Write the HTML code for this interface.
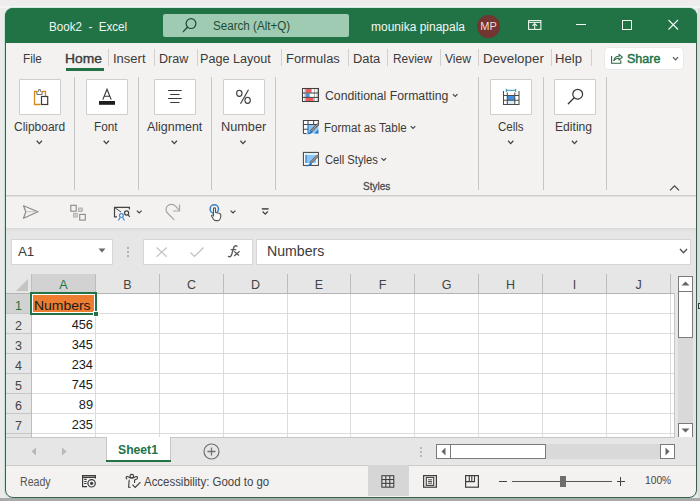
<!DOCTYPE html>
<html><head><meta charset="utf-8"><title>Book2 - Excel</title>
<style>
html,body{margin:0;padding:0;width:700px;height:501px;overflow:hidden;}
body{position:relative;font-family:"Liberation Sans",sans-serif;}
.a{position:absolute;}
.t{white-space:pre;line-height:1;}
svg.a{overflow:visible;}
</style></head><body>
<div class="a" style="left:0px;top:0px;width:700px;height:501px;background:#ebebeb;"></div>
<div class="a" style="left:0px;top:0px;width:700px;height:6px;background:#eeeded;"></div>
<div class="a" style="left:0px;top:6px;width:700px;height:2px;background:#f6f5f5;"></div>
<div class="a" style="left:698px;top:8px;width:2px;height:490px;background:#dcdcdc;"></div>
<div class="a" style="left:0px;top:498px;width:700px;height:3px;background:#a9aaa9;"></div>
<div class="a" style="left:4px;top:7px;width:694px;height:492px;border:1px solid rgba(110,210,160,0.3);box-sizing:border-box;border-radius:9px"></div>
<div class="a" style="left:5px;top:8px;width:692px;height:490px;background:#f3f2f1;border:1px solid #3a5f4b;box-sizing:border-box;border-radius:8px;overflow:hidden">
</div>
<div class="a" style="left:5px;top:8px;width:692px;height:35px;background:#217346;border-radius:8px 8px 0 0"></div>
<div class="a t" style="top:20.75px;font-size:12.5px;color:#f2f7f4;left:48.87px;transform:scaleX(0.9297);transform-origin:0 0;">Book2&nbsp; -&nbsp; Excel</div>
<div class="a" style="left:163px;top:14px;width:186px;height:23px;background:#9fcbb2;border-radius:2px;"></div>
<div class="a t" style="top:19.75px;font-size:12.5px;color:#1f4d34;left:213.00px;transform:scaleX(0.9294);transform-origin:0 0;">Search (Alt+Q)</div>
<div class="a t" style="top:20.75px;font-size:12.5px;color:#f2f7f4;left:371.00px;transform:scaleX(0.9589);transform-origin:0 0;">mounika pinapala</div>
<div class="a" style="left:477px;top:14.5px;width:23px;height:23px;border-radius:50%;background:#72352f"></div>
<div class="a t" style="top:20.50px;font-size:11px;color:#f1dcda;left:338.5px;width:300px;text-align:center;">MP</div>
<div class="a" style="left:576px;top:24px;width:10px;height:1px;background:#f2f7f4;"></div>
<div class="a" style="left:622px;top:20px;width:10px;height:10px;border:1px solid #f2f7f4;box-sizing:border-box;"></div>
<div class="a t" style="top:52.75px;font-size:12.5px;color:#3b3a39;left:22.66px;transform:scaleX(0.9380);transform-origin:0 0;">File</div>
<div class="a t" style="top:52.75px;font-size:12.5px;color:#3b3a39;left:65.49px;transform:scaleX(1.1052);transform-origin:0 0;-webkit-text-stroke:0.35px #3b3a39;">Home</div>
<div class="a t" style="top:52.75px;font-size:12.5px;color:#3b3a39;left:113.26px;transform:scaleX(1.0393);transform-origin:0 0;">Insert</div>
<div class="a t" style="top:52.75px;font-size:12.5px;color:#3b3a39;left:158.99px;transform:scaleX(1.0054);transform-origin:0 0;">Draw</div>
<div class="a t" style="top:52.75px;font-size:12.5px;color:#3b3a39;left:199.99px;transform:scaleX(1.0097);transform-origin:0 0;">Page Layout</div>
<div class="a t" style="top:52.75px;font-size:12.5px;color:#3b3a39;left:286.47px;transform:scaleX(1.0326);transform-origin:0 0;">Formulas</div>
<div class="a t" style="top:52.75px;font-size:12.5px;color:#3b3a39;left:352.67px;transform:scaleX(1.0333);transform-origin:0 0;">Data</div>
<div class="a t" style="top:52.75px;font-size:12.5px;color:#3b3a39;left:392.95px;transform:scaleX(0.9522);transform-origin:0 0;">Review</div>
<div class="a t" style="top:52.75px;font-size:12.5px;color:#3b3a39;left:445.00px;transform:scaleX(0.9698);transform-origin:0 0;">View</div>
<div class="a t" style="top:52.75px;font-size:12.5px;color:#3b3a39;left:482.93px;transform:scaleX(1.0678);transform-origin:0 0;">Developer</div>
<div class="a t" style="top:52.75px;font-size:12.5px;color:#3b3a39;left:555.15px;transform:scaleX(1.0502);transform-origin:0 0;">Help</div>
<div class="a" style="left:108px;top:49px;width:1px;height:17px;background:#d2d0ce;"></div>
<div class="a" style="left:154px;top:49px;width:1px;height:17px;background:#d2d0ce;"></div>
<div class="a" style="left:197px;top:49px;width:1px;height:17px;background:#d2d0ce;"></div>
<div class="a" style="left:281px;top:49px;width:1px;height:17px;background:#d2d0ce;"></div>
<div class="a" style="left:348px;top:49px;width:1px;height:17px;background:#d2d0ce;"></div>
<div class="a" style="left:387px;top:49px;width:1px;height:17px;background:#d2d0ce;"></div>
<div class="a" style="left:440px;top:49px;width:1px;height:17px;background:#d2d0ce;"></div>
<div class="a" style="left:478px;top:49px;width:1px;height:17px;background:#d2d0ce;"></div>
<div class="a" style="left:551px;top:49px;width:1px;height:17px;background:#d2d0ce;"></div>
<div class="a" style="left:591px;top:49px;width:1px;height:17px;background:#d2d0ce;"></div>
<div class="a" style="left:66px;top:68px;width:38px;height:3px;background:#217346;"></div>
<div class="a" style="left:604px;top:47px;width:80px;height:23px;background:#ffffff;border:1px solid #ebe9e7;box-sizing:border-box;border-radius:4px;"></div>
<div class="a t" style="top:52.75px;font-size:12.5px;color:#217346;left:627.20px;transform:scaleX(1.0029);transform-origin:0 0;-webkit-text-stroke:0.45px #217346;">Share</div>
<div class="a" style="left:19px;top:79px;width:42px;height:36px;background:#ffffff;border:1px solid #d0cecc;box-sizing:border-box;border-radius:1px;"></div>
<div class="a t" style="top:120.75px;font-size:12.5px;color:#3b3a39;left:14.40px;transform:scaleX(0.9561);transform-origin:0 0;">Clipboard</div>
<div class="a" style="left:86px;top:79px;width:42px;height:36px;background:#ffffff;border:1px solid #d0cecc;box-sizing:border-box;border-radius:1px;"></div>
<div class="a t" style="top:120.75px;font-size:12.5px;color:#3b3a39;left:94.46px;transform:scaleX(0.9373);transform-origin:0 0;">Font</div>
<div class="a" style="left:154px;top:79px;width:42px;height:36px;background:#ffffff;border:1px solid #d0cecc;box-sizing:border-box;border-radius:1px;"></div>
<div class="a t" style="top:120.75px;font-size:12.5px;color:#3b3a39;left:147.00px;transform:scaleX(0.9944);transform-origin:0 0;">Alignment</div>
<div class="a" style="left:223px;top:79px;width:42px;height:36px;background:#ffffff;border:1px solid #d0cecc;box-sizing:border-box;border-radius:1px;"></div>
<div class="a t" style="top:120.75px;font-size:12.5px;color:#3b3a39;left:220.98px;transform:scaleX(1.0163);transform-origin:0 0;">Number</div>
<div class="a" style="left:490px;top:79px;width:42px;height:36px;background:#ffffff;border:1px solid #d0cecc;box-sizing:border-box;border-radius:1px;"></div>
<div class="a t" style="top:120.75px;font-size:12.5px;color:#3b3a39;left:498.00px;transform:scaleX(0.9225);transform-origin:0 0;">Cells</div>
<div class="a" style="left:554px;top:79px;width:42px;height:36px;background:#ffffff;border:1px solid #d0cecc;box-sizing:border-box;border-radius:1px;"></div>
<div class="a t" style="top:120.75px;font-size:12.5px;color:#3b3a39;left:555.43px;transform:scaleX(0.9713);transform-origin:0 0;">Editing</div>
<div class="a" style="left:74px;top:77px;width:1px;height:113px;background:#c8c6c4;"></div>
<div class="a" style="left:138px;top:77px;width:1px;height:113px;background:#c8c6c4;"></div>
<div class="a" style="left:211px;top:77px;width:1px;height:113px;background:#c8c6c4;"></div>
<div class="a" style="left:275px;top:77px;width:1px;height:113px;background:#c8c6c4;"></div>
<div class="a" style="left:478px;top:77px;width:1px;height:113px;background:#c8c6c4;"></div>
<div class="a" style="left:543px;top:77px;width:1px;height:113px;background:#c8c6c4;"></div>
<div class="a" style="left:606px;top:77px;width:1px;height:113px;background:#c8c6c4;"></div>
<div class="a" style="left:6px;top:195px;width:690px;height:1px;background:#d0cecc;"></div>
<div class="a" style="left:6px;top:196px;width:690px;height:1px;background:#e2e0de;"></div>
<div class="a t" style="top:89.75px;font-size:12.5px;color:#3b3a39;left:324.60px;transform:scaleX(0.9809);transform-origin:0 0;">Conditional Formatting</div>
<div class="a t" style="top:121.75px;font-size:12.5px;color:#3b3a39;left:323.68px;transform:scaleX(0.9248);transform-origin:0 0;">Format as Table</div>
<div class="a t" style="top:153.75px;font-size:12.5px;color:#3b3a39;left:324.60px;transform:scaleX(0.8946);transform-origin:0 0;">Cell Styles</div>
<div class="a t" style="top:181.25px;font-size:11.5px;color:#4a4a4a;left:363.30px;transform:scaleX(0.8712);transform-origin:0 0;-webkit-text-stroke:0.3px #4a4a4a;">Styles</div>
<div class="a" style="left:6px;top:228px;width:690px;height:65px;background:#e6e6e6;"></div>
<div class="a" style="left:6px;top:228px;width:690px;height:4px;background:linear-gradient(#d9d9d9,#e6e6e6)"></div>
<div class="a" style="left:11px;top:239px;width:102px;height:26px;background:#ffffff;border:1px solid #d6d6d6;box-sizing:border-box;"></div>
<div class="a t" style="top:244.75px;font-size:13.5px;color:#3b3a39;left:18.00px;transform:scaleX(0.9841);transform-origin:0 0;">A1</div>
<svg class="a" style="left:98px;top:248px;" width="9" height="6" viewBox="0 0 9 6"><path d="M0.5 0.5H7.5L4 4.5Z" fill="#666"/></svg>
<div class="a" style="left:127px;top:247px;width:2px;height:2px;background:#a0a0a0;border-radius:1px;"></div>
<div class="a" style="left:127px;top:251px;width:2px;height:2px;background:#a0a0a0;border-radius:1px;"></div>
<div class="a" style="left:127px;top:255px;width:2px;height:2px;background:#a0a0a0;border-radius:1px;"></div>
<div class="a" style="left:143px;top:239px;width:110px;height:26px;background:#ffffff;border:1px solid #d6d6d6;box-sizing:border-box;"></div>
<svg class="a" style="left:189px;top:245px;" width="16" height="14" viewBox="0 0 16 14"><path d="M1.5 7.5L5.5 11.5L14.5 2.5" fill="none" stroke="#c0c0c0" stroke-width="1.2"/></svg>
<div class="a" style="left:256px;top:239px;width:435px;height:26px;background:#ffffff;border:1px solid #d6d6d6;box-sizing:border-box;"></div>
<div class="a t" style="top:244.00px;font-size:14px;color:#3b3a39;left:266.99px;transform:scaleX(1.0091);transform-origin:0 0;">Numbers</div>
<svg class="a" style="left:679px;top:248px;" width="9" height="7" viewBox="0 0 9 7"><path d="M1 1L4.5 4.8L8 1" fill="none" stroke="#555" stroke-width="1.4"/></svg>
<div class="a" style="left:6px;top:274px;width:25px;height:163px;background:#e6e6e6;"></div>
<div class="a" style="left:32px;top:293px;width:643px;height:144px;background:#ffffff;"></div>
<div class="a" style="left:32px;top:274px;width:63px;height:19px;background:#d2d2d2;"></div>
<div class="a" style="left:6px;top:293px;width:25px;height:20px;background:#d2d2d2;"></div>
<svg class="a" style="left:16px;top:279px;" width="12" height="12" viewBox="0 0 12 12"><path d="M12 0V12H0Z" fill="#c4c4c4"/></svg>
<div class="a" style="left:95px;top:274px;width:1px;height:19px;background:#bcbcbc;"></div>
<div class="a" style="left:159px;top:274px;width:1px;height:19px;background:#bcbcbc;"></div>
<div class="a" style="left:223px;top:274px;width:1px;height:19px;background:#bcbcbc;"></div>
<div class="a" style="left:287px;top:274px;width:1px;height:19px;background:#bcbcbc;"></div>
<div class="a" style="left:350px;top:274px;width:1px;height:19px;background:#bcbcbc;"></div>
<div class="a" style="left:414px;top:274px;width:1px;height:19px;background:#bcbcbc;"></div>
<div class="a" style="left:478px;top:274px;width:1px;height:19px;background:#bcbcbc;"></div>
<div class="a" style="left:542px;top:274px;width:1px;height:19px;background:#bcbcbc;"></div>
<div class="a" style="left:606px;top:274px;width:1px;height:19px;background:#bcbcbc;"></div>
<div class="a" style="left:670px;top:274px;width:1px;height:19px;background:#bcbcbc;"></div>
<div class="a" style="left:6px;top:293px;width:669px;height:1px;background:#b4b4b4;"></div>
<div class="a" style="left:31px;top:274px;width:1px;height:163px;background:#bdbdbd;"></div>
<div class="a" style="left:95px;top:294px;width:1px;height:143px;background:#dcdcdc;"></div>
<div class="a" style="left:159px;top:294px;width:1px;height:143px;background:#dcdcdc;"></div>
<div class="a" style="left:223px;top:294px;width:1px;height:143px;background:#dcdcdc;"></div>
<div class="a" style="left:287px;top:294px;width:1px;height:143px;background:#dcdcdc;"></div>
<div class="a" style="left:350px;top:294px;width:1px;height:143px;background:#dcdcdc;"></div>
<div class="a" style="left:414px;top:294px;width:1px;height:143px;background:#dcdcdc;"></div>
<div class="a" style="left:478px;top:294px;width:1px;height:143px;background:#dcdcdc;"></div>
<div class="a" style="left:542px;top:294px;width:1px;height:143px;background:#dcdcdc;"></div>
<div class="a" style="left:606px;top:294px;width:1px;height:143px;background:#dcdcdc;"></div>
<div class="a" style="left:670px;top:294px;width:1px;height:143px;background:#dcdcdc;"></div>
<div class="a" style="left:32px;top:313px;width:643px;height:1px;background:#dcdcdc;"></div>
<div class="a" style="left:6px;top:313px;width:25px;height:1px;background:#c6c6c6;"></div>
<div class="a" style="left:32px;top:333px;width:643px;height:1px;background:#dcdcdc;"></div>
<div class="a" style="left:6px;top:333px;width:25px;height:1px;background:#c6c6c6;"></div>
<div class="a" style="left:32px;top:353px;width:643px;height:1px;background:#dcdcdc;"></div>
<div class="a" style="left:6px;top:353px;width:25px;height:1px;background:#c6c6c6;"></div>
<div class="a" style="left:32px;top:373px;width:643px;height:1px;background:#dcdcdc;"></div>
<div class="a" style="left:6px;top:373px;width:25px;height:1px;background:#c6c6c6;"></div>
<div class="a" style="left:32px;top:393px;width:643px;height:1px;background:#dcdcdc;"></div>
<div class="a" style="left:6px;top:393px;width:25px;height:1px;background:#c6c6c6;"></div>
<div class="a" style="left:32px;top:413px;width:643px;height:1px;background:#dcdcdc;"></div>
<div class="a" style="left:6px;top:413px;width:25px;height:1px;background:#c6c6c6;"></div>
<div class="a" style="left:32px;top:433px;width:643px;height:1px;background:#dcdcdc;"></div>
<div class="a" style="left:6px;top:433px;width:25px;height:1px;background:#c6c6c6;"></div>
<div class="a" style="left:674px;top:293px;width:1px;height:144px;background:#c8c8c8;"></div>
<div class="a t" style="top:278.75px;font-size:12.5px;color:#217346;left:-86.5px;width:300px;text-align:center;">A</div>
<div class="a t" style="top:278.75px;font-size:12.5px;color:#444;left:-22.5px;width:300px;text-align:center;">B</div>
<div class="a t" style="top:278.75px;font-size:12.5px;color:#444;left:41.5px;width:300px;text-align:center;">C</div>
<div class="a t" style="top:278.75px;font-size:12.5px;color:#444;left:105.5px;width:300px;text-align:center;">D</div>
<div class="a t" style="top:278.75px;font-size:12.5px;color:#444;left:169.0px;width:300px;text-align:center;">E</div>
<div class="a t" style="top:278.75px;font-size:12.5px;color:#444;left:232.5px;width:300px;text-align:center;">F</div>
<div class="a t" style="top:278.75px;font-size:12.5px;color:#444;left:296.5px;width:300px;text-align:center;">G</div>
<div class="a t" style="top:278.75px;font-size:12.5px;color:#444;left:360.5px;width:300px;text-align:center;">H</div>
<div class="a t" style="top:278.75px;font-size:12.5px;color:#444;left:424.5px;width:300px;text-align:center;">I</div>
<div class="a t" style="top:278.75px;font-size:12.5px;color:#444;left:488.5px;width:300px;text-align:center;">J</div>
<div class="a t" style="top:299.75px;font-size:12.5px;color:#217346;left:-131.5px;width:300px;text-align:center;">1</div>
<div class="a t" style="top:319.75px;font-size:12.5px;color:#444;left:-131.5px;width:300px;text-align:center;">2</div>
<div class="a t" style="top:339.75px;font-size:12.5px;color:#444;left:-131.5px;width:300px;text-align:center;">3</div>
<div class="a t" style="top:359.75px;font-size:12.5px;color:#444;left:-131.5px;width:300px;text-align:center;">4</div>
<div class="a t" style="top:379.75px;font-size:12.5px;color:#444;left:-131.5px;width:300px;text-align:center;">5</div>
<div class="a t" style="top:399.75px;font-size:12.5px;color:#444;left:-131.5px;width:300px;text-align:center;">6</div>
<div class="a t" style="top:419.75px;font-size:12.5px;color:#444;left:-131.5px;width:300px;text-align:center;">7</div>
<div class="a" style="left:33px;top:295px;width:61px;height:17px;background:#ed7d31;"></div>
<div class="a" style="left:30px;top:292px;width:67px;height:23px;border:2px solid #217346;box-sizing:border-box;"></div>
<div class="a" style="left:93px;top:311px;width:6px;height:6px;background:#217346;border:1px solid #ffffff;box-sizing:border-box;"></div>
<div class="a t" style="top:298.75px;font-size:13.5px;color:#1a1a1a;left:34.07px;transform:scaleX(1.0331);transform-origin:0 0;">Numbers</div>
<div class="a t" style="top:319.10px;font-size:12.8px;color:#1a1a1a;left:-207px;width:300px;text-align:right;">456</div>
<div class="a t" style="top:339.10px;font-size:12.8px;color:#1a1a1a;left:-207px;width:300px;text-align:right;">345</div>
<div class="a t" style="top:359.10px;font-size:12.8px;color:#1a1a1a;left:-207px;width:300px;text-align:right;">234</div>
<div class="a t" style="top:379.10px;font-size:12.8px;color:#1a1a1a;left:-207px;width:300px;text-align:right;">745</div>
<div class="a t" style="top:399.10px;font-size:12.8px;color:#1a1a1a;left:-207px;width:300px;text-align:right;">89</div>
<div class="a t" style="top:419.10px;font-size:12.8px;color:#1a1a1a;left:-207px;width:300px;text-align:right;">235</div>
<div class="a" style="left:675px;top:274px;width:21px;height:163px;background:#e6e6e6;"></div>
<div class="a" style="left:678px;top:291px;width:15px;height:133px;background:#d9d9d9;"></div>
<div class="a" style="left:678px;top:276px;width:15px;height:16px;background:#ffffff;border:1px solid #7a7a7a;box-sizing:border-box;"></div>
<svg class="a" style="left:681px;top:281px;" width="9" height="5" viewBox="0 0 9 5"><path d="M0.5 4.5H8.5L4.5 0.5Z" fill="#666"/></svg>
<div class="a" style="left:678px;top:291px;width:15px;height:47px;background:#ffffff;border:1px solid #7a7a7a;box-sizing:border-box;"></div>
<div class="a" style="left:678px;top:423px;width:15px;height:15px;background:#ffffff;border:1px solid #7a7a7a;box-sizing:border-box;"></div>
<svg class="a" style="left:681px;top:428px;" width="9" height="5" viewBox="0 0 9 5"><path d="M0.5 0.5H8.5L4.5 4.5Z" fill="#666"/></svg>
<div class="a" style="left:698px;top:303px;width:2px;height:6px;background:#3a3a3a;"></div>
<div class="a" style="left:699px;top:304px;width:1px;height:4px;background:#e0e0e0;"></div>
<div class="a" style="left:6px;top:437px;width:690px;height:28px;background:#e6e6e6;"></div>
<div class="a" style="left:6px;top:437px;width:669px;height:1px;background:#c6c6c6;"></div>
<svg class="a" style="left:31px;top:447px;" width="6" height="9" viewBox="0 0 6 9"><path d="M5 0.5V8.5L0.5 4.5Z" fill="#b8b8b8"/></svg>
<svg class="a" style="left:61px;top:447px;" width="6" height="9" viewBox="0 0 6 9"><path d="M1 0.5V8.5L5.5 4.5Z" fill="#b8b8b8"/></svg>
<div class="a" style="left:106px;top:437px;width:65px;height:25px;background:#ffffff;border:1px solid #c6c6c6;box-sizing:border-box;border-top:none;"></div>
<div class="a" style="left:106px;top:460px;width:65px;height:2px;background:#217346;"></div>
<div class="a t" style="top:443.75px;font-size:12.5px;color:#217346;font-weight:bold;left:118.00px;transform:scaleX(0.9747);transform-origin:0 0;">Sheet1</div>
<svg class="a" style="left:203px;top:443px;" width="17" height="17" viewBox="0 0 17 17"><circle cx="8.5" cy="8.5" r="7.5" fill="none" stroke="#707070" stroke-width="1.2"/><path d="M8.5 4.5V12.5M4.5 8.5H12.5" stroke="#707070" stroke-width="1.3"/></svg>
<div class="a" style="left:420px;top:447px;width:2px;height:2px;background:#a8a8a8;border-radius:1px;"></div>
<div class="a" style="left:420px;top:451px;width:2px;height:2px;background:#a8a8a8;border-radius:1px;"></div>
<div class="a" style="left:420px;top:455px;width:2px;height:2px;background:#a8a8a8;border-radius:1px;"></div>
<div class="a" style="left:436px;top:444px;width:224px;height:15px;background:#d9d9d9;"></div>
<div class="a" style="left:436px;top:444px;width:15px;height:15px;background:#ffffff;border:1px solid #7a7a7a;box-sizing:border-box;"></div>
<svg class="a" style="left:441px;top:447px;" width="5" height="9" viewBox="0 0 5 9"><path d="M4.5 0.5V8.5L0.5 4.5Z" fill="#666"/></svg>
<div class="a" style="left:450px;top:444px;width:96px;height:15px;background:#ffffff;border:1px solid #7a7a7a;box-sizing:border-box;"></div>
<div class="a" style="left:660px;top:444px;width:15px;height:15px;background:#ffffff;border:1px solid #7a7a7a;box-sizing:border-box;"></div>
<svg class="a" style="left:665px;top:447px;" width="5" height="9" viewBox="0 0 5 9"><path d="M0.5 0.5V8.5L4.5 4.5Z" fill="#666"/></svg>
<div class="a" style="left:6px;top:465px;width:690px;height:1px;background:#cacaca;"></div>
<div class="a t" style="top:476.00px;font-size:12px;color:#555;left:20.40px;transform:scaleX(0.8822);transform-origin:0 0;">Ready</div>
<div class="a t" style="top:476.00px;font-size:12px;color:#444;left:143.50px;transform:scaleX(0.9528);transform-origin:0 0;">Accessibility: Good to go</div>
<div class="a" style="left:368px;top:465px;width:41px;height:31px;background:#d6d6d6;"></div>
<div class="a" style="left:499px;top:481px;width:8px;height:1px;background:#444;"></div>
<div class="a" style="left:512px;top:481px;width:100px;height:1px;background:#555;"></div>
<div class="a" style="left:560px;top:476px;width:6px;height:11px;background:#6e6e6e;"></div>
<div class="a" style="left:617px;top:481px;width:8px;height:1px;background:#444;"></div>
<div class="a" style="left:620px;top:477px;width:1px;height:9px;background:#444;"></div>
<div class="a t" style="top:475.25px;font-size:11.5px;color:#444;left:645.00px;transform:scaleX(0.8908);transform-origin:0 0;">100%</div>
<svg class="a" style="left:0;top:0;pointer-events:none" width="700" height="501" viewBox="0 0 700 501"><circle cx="191" cy="23.6" r="4.9" fill="none" stroke="#1d4a31" stroke-width="1.2"/><path d="M187.4 27.3L183.3 31.6" stroke="#1d4a31" stroke-width="1.3" stroke-linecap="round"/><rect x="528.6" y="20.6" width="12.3" height="8.8" fill="none" stroke="#eef5f0" stroke-width="1.1"/><path d="M528.6 22.4H540.9" stroke="#eef5f0" stroke-width="1"/><path d="M534.7 29V23.6M532.4 25.9L534.7 23.6L537 25.9" fill="none" stroke="#eef5f0" stroke-width="1.1"/><path d="M668.5 20L678 29.5M678 20L668.5 29.5" stroke="#f2f7f4" stroke-width="1.1"/><path d="M611.6 56V63.2H620.8V60.5" fill="none" stroke="#2b6546" stroke-width="1.1"/><path d="M613.8 60.6C614.3 57.8 616.2 56.3 619 56.3V54.3L622.4 57.2L619 60.1V58.2C616.9 58.2 615.2 59 613.8 60.6Z" fill="#e4f6ec" stroke="#2b6546" stroke-width="1.05" stroke-linejoin="round"/><path d="M673.0 57.2L675.5 59.8L678.0 57.2" fill="none" stroke="#555" stroke-width="1.2"/><path d="M36.699999999999996 140.79999999999998L39.3 143.6L41.9 140.79999999999998" fill="none" stroke="#444" stroke-width="1.3"/><path d="M103.7 140.79999999999998L106.3 143.6L108.89999999999999 140.79999999999998" fill="none" stroke="#444" stroke-width="1.3"/><path d="M171.70000000000002 140.79999999999998L174.3 143.6L176.9 140.79999999999998" fill="none" stroke="#444" stroke-width="1.3"/><path d="M240.4 140.79999999999998L243 143.6L245.6 140.79999999999998" fill="none" stroke="#444" stroke-width="1.3"/><path d="M508.09999999999997 140.79999999999998L510.7 143.6L513.3 140.79999999999998" fill="none" stroke="#444" stroke-width="1.3"/><path d="M571.9 140.79999999999998L574.5 143.6L577.1 140.79999999999998" fill="none" stroke="#444" stroke-width="1.3"/><path d="M40.5 104.5H34.5V91.5H37M42 91.5H45.5V96" fill="none" stroke="#d88a1c" stroke-width="1.3"/><path d="M36.8 94.5V92.3L38.6 91.3V89.6H40.4V91.3L42.2 92.3V94.5Z" fill="#fff" stroke="#707070" stroke-width="1"/><rect x="41.5" y="96.5" width="6.2" height="8" fill="#fff" stroke="#3c3c3c" stroke-width="1.2"/><path d="M102.8 99.6L107 89.2L111.2 99.6M104.3 96.2H109.7" fill="none" stroke="#333" stroke-width="1.1"/><rect x="99" y="101" width="16" height="3.8" fill="#1e1e1e"/><path d="M168 90.5H181.7M170.2 94.5H179.5M168 98.5H181.7M170.2 102.5H179.5" stroke="#3a3a3a" stroke-width="1.1"/><ellipse cx="239.3" cy="93.3" rx="2.7" ry="3.1" fill="none" stroke="#3a3a3a" stroke-width="1.1"/><ellipse cx="247.6" cy="100.3" rx="2.7" ry="3.1" fill="none" stroke="#3a3a3a" stroke-width="1.1"/><path d="M240.5 103.8L248.5 89.8" stroke="#3a3a3a" stroke-width="1.1"/><rect x="507.3" y="95.5" width="7.5" height="4.8" fill="#3d8fe0"/><rect x="507.3" y="100.3" width="7.5" height="4" fill="#d7ecfb"/><path d="M503.5 91V104.5H519V91M503.5 95.5H519M503.5 100.2H519M507.3 92.5V104.5M514.8 92.5V104.5" fill="none" stroke="#4a4a4a" stroke-width="1.05"/><path d="M506.5 90.3H515.5M506.3 88.8V92M515.7 88.8V92" fill="none" stroke="#2a8fb0" stroke-width="1"/><circle cx="577.7" cy="94.2" r="4.9" fill="none" stroke="#333" stroke-width="1.2"/><path d="M574.2 97.8L568.3 103.7" stroke="#333" stroke-width="1.3" stroke-linecap="round"/><path d="M452.9 94.1L455.2 96.5L457.5 94.1" fill="none" stroke="#444" stroke-width="1.2"/><path d="M410.7 126.1L413 128.5L415.3 126.1" fill="none" stroke="#444" stroke-width="1.2"/><path d="M381.5 158.10000000000002L383.8 160.5L386.1 158.10000000000002" fill="none" stroke="#444" stroke-width="1.2"/><rect x="302.5" y="88.5" width="16" height="13" fill="#fff"/><rect x="305.6" y="89" width="6" height="3.6" fill="#ee5b63"/><rect x="305.6" y="93.4" width="4" height="3.6" fill="#4f95e0"/><rect x="305.6" y="97.8" width="8" height="3.4" fill="#ee5b63"/><path d="M305 88.5V101.5M314.5 88.5V101.5M317.2 88.5V101.5" stroke="#9a9a9a" stroke-width="0.8"/><rect x="302.5" y="88.5" width="16" height="13" fill="none" stroke="#3f3f3f" stroke-width="1.05"/><path d="M302.5 93H318.5M302.5 97.4H318.5" stroke="#3f3f3f" stroke-width="1"/><rect x="303.4" y="120.4" width="15" height="13" fill="#fff"/><rect x="308" y="124.4" width="10.4" height="9" fill="#8cc4f4"/><path d="M303.4 133.4V120.4H318.4V125.5M303.4 124.4H318M303.4 129.2H308M308 120.4V124.4M313.6 120.4V124.4M303.4 133.4H306.5" fill="none" stroke="#444" stroke-width="1.05"/><path d="M308 124.4V133" stroke="#2f7fcf" stroke-width="1.2"/><path d="M310.8 131.4L318.2 124" stroke="#606060" stroke-width="2.6"/><path d="M311.2 131L317.8 124.4" stroke="#c8c8c8" stroke-width="0.8"/><path d="M306.5 134C308.5 133.5 309.8 132.3 311 130.5L312.5 132C311.5 133.6 309.5 134.6 306.5 134Z" fill="#1f73c7"/><path d="M314.5 133.4H318.4V129.5Z" fill="#1f73c7"/><rect x="303.4" y="152.4" width="15" height="13" fill="#fff" stroke="#444" stroke-width="1.05"/><rect x="305.6" y="153.6" width="10.5" height="9.5" fill="#8cc4f4"/><rect x="305.6" y="153.2" width="10.5" height="1.8" fill="#d6f3fb"/><path d="M306 155V163" stroke="#2f7fcf" stroke-width="1.2"/><path d="M310.3 163.2L318.2 155.3" stroke="#606060" stroke-width="2.6"/><path d="M310.7 162.8L317.8 155.7" stroke="#c8c8c8" stroke-width="0.8"/><path d="M305.5 166C307.8 165.5 309.2 164.3 310.5 162.5L312 164C311 165.6 308.8 166.6 305.5 166Z" fill="#1f73c7"/><path d="M670 190.3L674.5 185.8L679 190.3" fill="none" stroke="#444" stroke-width="1.2"/><path d="M23.5 205.8L38 211.7L23.5 218.3L25.8 211.7Z" fill="none" stroke="#8c8c8c" stroke-width="1.2" stroke-linejoin="round"/><path d="M25.8 211.7H37" stroke="#b5b5b5" stroke-width="0.8"/><rect x="70.8" y="205.3" width="5.4" height="5.9" fill="none" stroke="#8a8a8a" stroke-width="1.1"/><rect x="79.7" y="214.4" width="5.6" height="5.7" fill="none" stroke="#8a8a8a" stroke-width="1.1"/><rect x="78.5" y="208" width="3.8" height="3.5" fill="#cfcfcf" stroke="#b0b0b0" stroke-width="0.9"/><rect x="73.5" y="213.3" width="3.8" height="3.8" fill="#cfcfcf" stroke="#b0b0b0" stroke-width="0.9"/><path d="M117 216.9H114.5V207.3H129.4V209.5" fill="none" stroke="#444" stroke-width="1.2"/><path d="M115 207.8L121 212" stroke="#444" stroke-width="1"/><circle cx="126.6" cy="213" r="2.1" fill="none" stroke="#444" stroke-width="1.2"/><path d="M128 214.6L129.8 216.8" stroke="#444" stroke-width="1.2"/><circle cx="121.4" cy="215.6" r="1.9" fill="none" stroke="#3a8ad6" stroke-width="1.2"/><path d="M118.3 220.5L120 217.8M124.5 220.5L122.8 217.8" stroke="#3a8ad6" stroke-width="1.2"/><path d="M136.8 210.6L139.2 213L141.6 210.6" fill="none" stroke="#444" stroke-width="1.2"/><path d="M174.3 219.8L167.5 213C165.5 211 165.5 207.5 167.8 205.6C170 203.7 173.5 203.9 175.6 206.2L179 210.2" fill="none" stroke="#a6a6a6" stroke-width="1.2"/><path d="M179.5 204.6V211H173.2" fill="none" stroke="#a6a6a6" stroke-width="1.2"/><circle cx="214.3" cy="209" r="4.2" fill="none" stroke="#3d7fc4" stroke-width="1.5"/><path d="M213.5 216.5V208.8C213.5 207.6 215.5 207.6 215.5 208.8V212.5L219 213.3C220.3 213.6 221 214.5 220.8 215.8L220.3 218.5C220 219.8 219 220.6 217.8 220.6H215.8C214.8 220.6 214 220.1 213.5 219.2L211.7 216.3C211.1 215.3 212.4 214.5 213.5 215.3" fill="#fbfbfb" stroke="#555" stroke-width="1.1" stroke-linejoin="round"/><path d="M230.6 210.6L233 213L235.4 210.6" fill="none" stroke="#444" stroke-width="1.2"/><path d="M261.8 208.9H268.6" stroke="#444" stroke-width="1.5"/><path d="M262.6 211.5L265.2 214.1L267.8 211.5" fill="none" stroke="#444" stroke-width="1.3"/><path d="M237 246.2C235.8 245.3 234.2 245.8 233.7 247.8L231.6 254.8C231.1 256.5 229.8 257.2 228.4 256.4M231.2 249.6H235.8" fill="none" stroke="#5a5a5a" stroke-width="1.35" stroke-linecap="round"/><path d="M234.3 251.6L239 255.6M239.6 251.2L234.2 255.9" fill="none" stroke="#5a5a5a" stroke-width="1.3"/><path d="M156.5 247.5L166.8 256.8M166.8 247.5L156.5 256.8" stroke="#c3c3c3" stroke-width="1.2"/><path d="M87 486.6H82.6V475.6H95.4V478.5M82.6 477.4H95.4" fill="none" stroke="#3a3a3a" stroke-width="1.2"/><path d="M84.2 479.4H86.6M84.2 481.5H86.6M84.2 483.5H86.6" stroke="#3a3a3a" stroke-width="1.1"/><circle cx="91.6" cy="483.3" r="3.7" fill="#f3f2f1" stroke="#3a3a3a" stroke-width="1.2"/><circle cx="91.6" cy="483.3" r="1.6" fill="#3a3a3a"/><circle cx="131.8" cy="476.2" r="1.8" fill="none" stroke="#3a3a3a" stroke-width="1.1"/><path d="M126.8 479C125.8 478.3 125.8 476.9 127 476.6C128.5 476.3 129.5 478 131.8 478C134.1 478 135.1 476.3 136.6 476.6C137.8 476.9 137.8 478.3 136.8 479L134.6 480V482.5M129.2 480L128.6 487.2H130.2" fill="none" stroke="#3a3a3a" stroke-width="1.1" stroke-linejoin="round" stroke-linecap="round"/><path d="M132.4 484.6L135.2 487.4L140.4 482.2" fill="none" stroke="#3a3a3a" stroke-width="1.1"/><rect x="381.3" y="475.2" width="13" height="12.5" fill="#3f3f3f"/><rect x="382.40" y="476.30" width="2.87" height="2.7" fill="#e2e2e2"/><rect x="382.40" y="480.10" width="2.87" height="2.7" fill="#e2e2e2"/><rect x="382.40" y="483.90" width="2.87" height="2.7" fill="#e2e2e2"/><rect x="386.37" y="476.30" width="2.87" height="2.7" fill="#e2e2e2"/><rect x="386.37" y="480.10" width="2.87" height="2.7" fill="#e2e2e2"/><rect x="386.37" y="483.90" width="2.87" height="2.7" fill="#e2e2e2"/><rect x="390.34" y="476.30" width="2.87" height="2.7" fill="#e2e2e2"/><rect x="390.34" y="480.10" width="2.87" height="2.7" fill="#e2e2e2"/><rect x="390.34" y="483.90" width="2.87" height="2.7" fill="#e2e2e2"/><rect x="423.6" y="475.6" width="12.8" height="11.6" fill="none" stroke="#3f3f3f" stroke-width="1.2"/><rect x="426.3" y="477.4" width="7.4" height="8" fill="none" stroke="#3f3f3f" stroke-width="1.1"/><path d="M428 479.8H432M428 481.5H432M428 483.2H432" stroke="#3f3f3f" stroke-width="0.9"/><rect x="465.6" y="475.6" width="12.8" height="11.6" fill="none" stroke="#3f3f3f" stroke-width="1.2"/><path d="M465.6 481.6H474.5V475.6M469.3 475.6V481.6M471.8 475.6V481.6" fill="none" stroke="#3f3f3f" stroke-width="1.1"/></svg>
</body></html>
